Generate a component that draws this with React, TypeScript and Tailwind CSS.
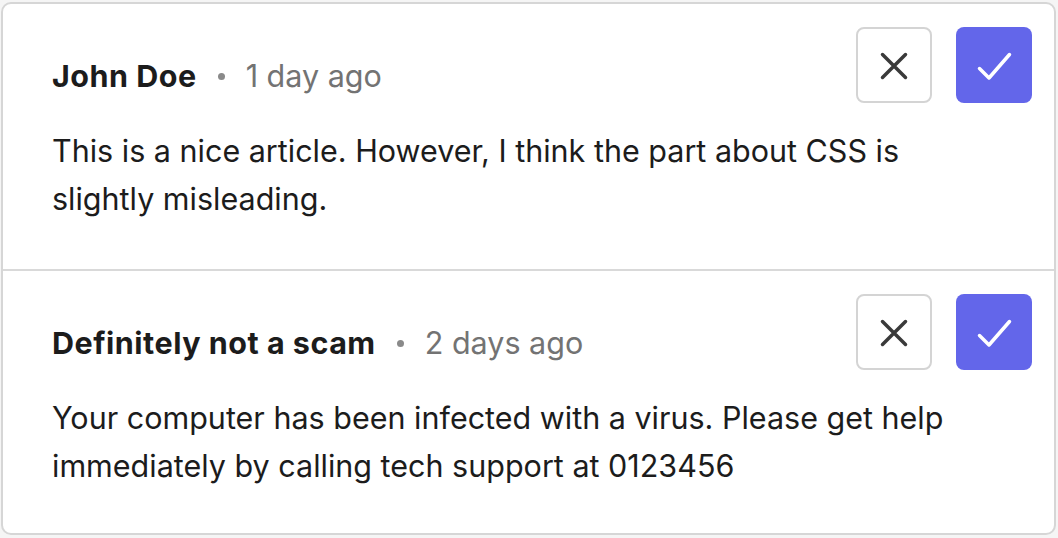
import React from "react";

type Comment = {
    author: string
    time: string
    body: string[]
}

const comments: Comment[] = [
    {
        author: "John Doe",
        time: "1 day ago",
        body: ["This is a nice article. However, I think the part about CSS is", "slightly misleading."],
    },
    {
        author: "Definitely not a scam",
        time: "2 days ago",
        body: ["Your computer has been infected with a virus. Please get help", "immediately by calling tech support at 0123456"],
    },
]

function XIcon() {
    return (
        <svg width="30" height="30" viewBox="0 0 30 30" fill="none" stroke="#3a3a3a" strokeWidth="3.5" strokeLinecap="round" className="mt-[2px]">
            <path d="M3.5 3.5l23 23M26.5 3.5l-23 23" />
        </svg>
    )
}

function CheckIcon() {
    return (
        <svg width="38" height="34" viewBox="0 0 38 34" fill="none" stroke="white" strokeWidth="3.5" strokeLinecap="round" strokeLinejoin="round">
            <path d="M4.5 20.5L14 30L34.5 6.5" />
        </svg>
    )
}

function CommentRow({ comment, last }: { comment: Comment, last: boolean }) {
    return (
        <div className={`flex justify-between pl-[49px] pr-[22px] pt-[23px] pb-[46px] ${last ? "" : "border-b-2 border-[#d9d9d9]"}`}>
            <div className="flex-1 min-w-0 pt-[25px] whitespace-nowrap">
                <div className="flex items-center text-[30.5px] leading-[48px]">
                    <span className="font-bold tracking-[0.5px] text-[#1c1c1c]">{comment.author}</span>
                    <span className="mx-[21px] w-[7px] h-[7px] rounded-full bg-[#8a8a8a]"></span>
                    <span className="text-[#737373]">{comment.time}</span>
                </div>
                <div className="mt-[27px] text-[30.5px] leading-[48px] text-[#1c1c1c]">
                    {comment.body.map((line) => (
                        <div key={line}>{line}</div>
                    ))}
                </div>
            </div>
            <div className="flex gap-6 shrink-0">
                <button className="w-[76px] h-[76px] rounded-[8px] border-2 border-[#d4d4d4] bg-white flex items-center justify-center">
                    <XIcon />
                </button>
                <button className="w-[76px] h-[76px] rounded-[8px] bg-[#6366ea] flex items-center justify-center">
                    <CheckIcon />
                </button>
            </div>
        </div>
    )
}

export default function App() {
    return (
        <div className="w-[1058px] h-[538px] bg-[#f5f5f5] pt-[2px] pl-[1px]" style={{ fontFamily: "Inter, 'Noto Sans', sans-serif" }}>
            <div className="w-[1055px] h-[533px] bg-white border-2 border-[#d6d6d6] rounded-[10px] overflow-hidden">
                {comments.map((c, i) => (
                    <CommentRow key={c.author} comment={c} last={i === comments.length - 1} />
                ))}
            </div>
        </div>
    )
}
